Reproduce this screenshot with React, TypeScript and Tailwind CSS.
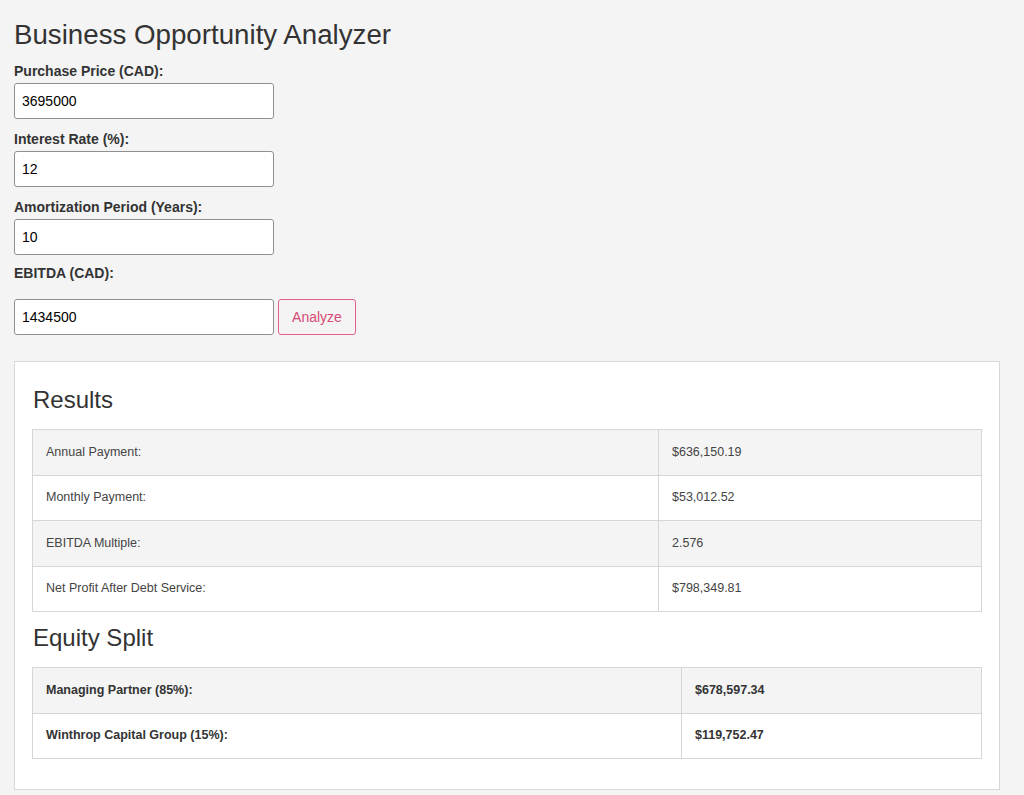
const fields = [
  { label: "Purchase Price (CAD):", value: "3695000" },
  { label: "Interest Rate (%):", value: "12" },
  { label: "Amortization Period (Years):", value: "10" },
];

const results = [
  ["Annual Payment:", "$636,150.19"],
  ["Monthly Payment:", "$53,012.52"],
  ["EBITDA Multiple:", "2.576"],
  ["Net Profit After Debt Service:", "$798,349.81"],
];

const equity = [
  ["Managing Partner (85%):", "$678,597.34"],
  ["Winthrop Capital Group (15%):", "$119,752.47"],
];

function Input({ value }: { value: string }) {
  return (
    <input
      defaultValue={value}
      className="h-9 w-[260px] rounded-[3px] border border-[#8f8f8f] bg-white px-[7px] text-[14px] text-black outline-none"
    />
  );
}

export default function App() {
  return (
    <div className="min-h-[795px] bg-[#f4f4f4] px-[14px] pt-[18px] font-['Liberation_Sans',Arial,sans-serif] text-[#333]">
      <h1 className="text-[27.7px] leading-[34px]">Business Opportunity Analyzer</h1>

      <div className="mt-[11px]">
        {fields.map((f) => (
          <div key={f.label} className="mb-[12px]">
            <label className="block text-[14px] font-bold leading-[16px]">{f.label}</label>
            <div className="mt-[4px]">
              <Input value={f.value} />
            </div>
          </div>
        ))}
        <label className="-mt-[2px] block text-[14px] font-bold leading-[16px]">EBITDA (CAD):</label>
        <div className="mt-[18px] flex items-center gap-[4px]">
          <Input value="1434500" />
          <button className="h-9 w-[78px] rounded-[3px] border border-[#e0608a] bg-[#f4f4f4] text-[14px] text-[#d84a74]">
            Analyze
          </button>
        </div>
      </div>

      <div className="mt-[26px] mr-[10px] border border-[#d8d8d8] bg-white px-[17px] pb-[30px] pt-[24px]">
        <h2 className="pl-[1px] text-[24px] leading-[28px]">Results</h2>
        <table className="mt-[15px] w-full border-collapse text-[12.5px] text-[#444]">
          <tbody>
            {results.map(([k, v], i) => (
              <tr key={k} className={i % 2 === 0 ? "bg-[#f4f4f4]" : "bg-white"}>
                <td className="h-[45.5px] w-[626px] border border-[#d6d6d6] pl-[13px]">{k}</td>
                <td className="h-[45.5px] border border-[#d6d6d6] pl-[13px]">{v}</td>
              </tr>
            ))}
          </tbody>
        </table>

        <h2 className="mt-[12px] pl-[1px] text-[24px] leading-[28px]">Equity Split</h2>
        <table className="mt-[15px] w-full border-collapse text-[12.5px] font-bold text-[#333]">
          <tbody>
            {equity.map(([k, v], i) => (
              <tr key={k} className={i % 2 === 0 ? "bg-[#f4f4f4]" : "bg-white"}>
                <td className="h-[45.5px] w-[649px] border border-[#d6d6d6] pl-[13px]">{k}</td>
                <td className="h-[45.5px] border border-[#d6d6d6] pl-[13px]">{v}</td>
              </tr>
            ))}
          </tbody>
        </table>
      </div>
    </div>
  );
}
